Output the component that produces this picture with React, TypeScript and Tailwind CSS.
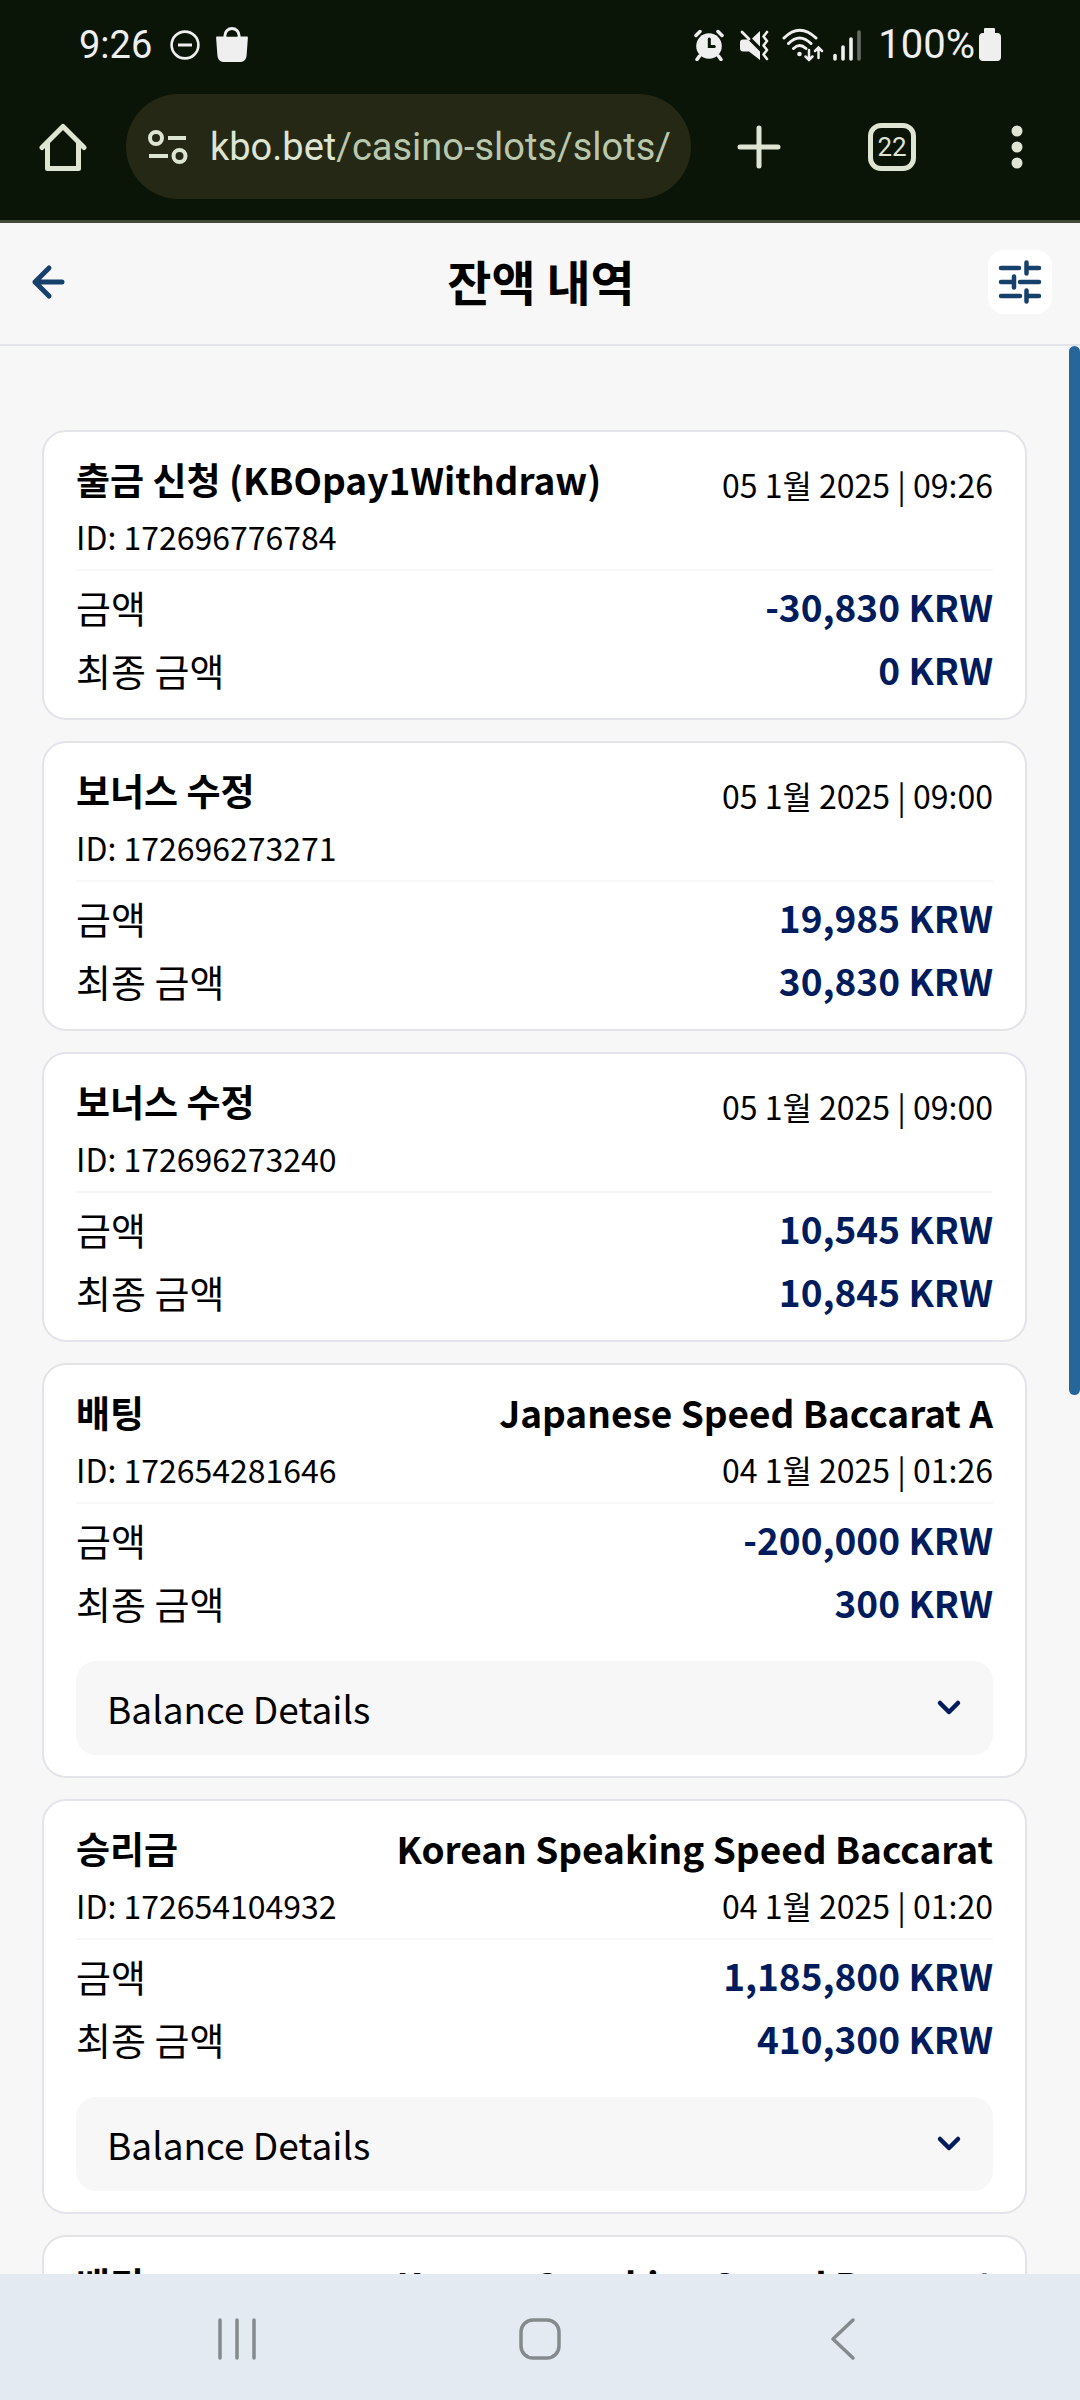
import { useState } from "react";

interface Transaction {
  id: string;
  type: string;
  date: string;
  amount: string;
  finalAmount: string;
  game?: string;
}

const transactions: Transaction[] = [
  {
    id: "172696776784",
    type: "출금 신청 (KBOpay1Withdraw)",
    date: "05 1월 2025 | 09:26",
    amount: "-30,830 KRW",
    finalAmount: "0 KRW",
  },
  {
    id: "172696273271",
    type: "보너스 수정",
    date: "05 1월 2025 | 09:00",
    amount: "19,985 KRW",
    finalAmount: "30,830 KRW",
  },
  {
    id: "172696273240",
    type: "보너스 수정",
    date: "05 1월 2025 | 09:00",
    amount: "10,545 KRW",
    finalAmount: "10,845 KRW",
  },
  {
    id: "172654281646",
    type: "배팅",
    game: "Japanese Speed Baccarat A",
    date: "04 1월 2025 | 01:26",
    amount: "-200,000 KRW",
    finalAmount: "300 KRW",
  },
  {
    id: "172654104932",
    type: "승리금",
    game: "Korean Speaking Speed Baccarat",
    date: "04 1월 2025 | 01:20",
    amount: "1,185,800 KRW",
    finalAmount: "410,300 KRW",
  },
  {
    id: "172654098817",
    type: "배팅",
    game: "Korean Speaking Speed Baccarat",
    date: "04 1월 2025 | 01:19",
    amount: "-400,000 KRW",
    finalAmount: "10,300 KRW",
  },
];

function StatusBar() {
  return (
    <div className="flex h-[90px] items-center justify-between px-[79px] text-[#efefef]">
      <div className="flex items-center">
        <span className="w-[91px] text-[38px] leading-[48px]">9:26</span>
        <svg width="30" height="30" viewBox="0 0 30 30" fill="none" stroke="currentColor" aria-hidden>
          <circle cx="15" cy="15" r="13.4" strokeWidth="2.6" />
          <path d="M8 15h14" strokeWidth="3" />
        </svg>
        <svg className="ml-4" width="32" height="36" viewBox="0 0 32 36" aria-hidden>
          <path d="M9 12V8.500a7 7 0 0 1 14 0V12" fill="none" stroke="currentColor" strokeWidth="3" />
          <path d="M1 9.500h30q1 0 .9 1l-1.300 18q-.6 6.500-6 6.500H7.400q-5.400 0-6-6.500L.1 10.500q-.1-1 .9-1z" fill="currentColor" />
          <path d="M10.500 9.500a5.500 5 0 0 1 11 0z" fill="#0a1508" />
        </svg>
      </div>
      <div className="flex items-center">
        <svg width="30" height="32" viewBox="0 0 30 32" fill="none" stroke="currentColor" strokeLinecap="round" aria-hidden>
          <circle cx="15" cy="17" r="12.8" fill="currentColor" stroke="none" />
          <path d="M2 6.500 6 2.500M28 6.500l-4-4" strokeWidth="3.500" />
          <path d="m5.500 27-2.500 3.500M24.500 27l2.500 3.500" strokeWidth="3.500" />
          <path d="M15.300 10v7.500h5" stroke="#0a1508" strokeWidth="3" />
        </svg>
        <svg className="ml-[15px]" width="30" height="32" viewBox="0 0 30 32" aria-hidden>
          <path d="M4 10.500h5L21 22.500V31L10 22.500H4q-3 0-3-3v-6q0-3 3-3zM13 9.500 21 2v15.500z" fill="currentColor" />
          <path d="m3 3 7 7" stroke="currentColor" strokeWidth="2.800" strokeLinecap="round" />
          <path d="m28 3-3.500 4.500L28 12l-3.500 4.500L28 21l-3.500 4.500L28 30" fill="none" stroke="currentColor" strokeWidth="2.600" strokeLinecap="round" strokeLinejoin="round" />
        </svg>
        <svg className="ml-[13px]" width="42" height="34" viewBox="0 0 42 34" fill="none" stroke="currentColor" strokeWidth="3" strokeLinecap="round" aria-hidden>
          <path d="M2 10Q17.500-5.500 34 10M6.500 15.500Q17.500 4.500 29 15.500M11.500 20.500q6-6 12.500 0" />
          <circle cx="17.500" cy="26" r="2.300" fill="currentColor" stroke="none" />
          <path d="M27 22v10M23.500 28.500l3.500 3.500 3.500-3.500M36.500 30V19.500M33 23l3.500-3.500L40 23" strokeWidth="2.500" />
        </svg>
        <svg className="ml-2" width="30" height="32" viewBox="0 0 30 32" stroke="currentColor" strokeWidth="3.600" strokeLinecap="round" aria-hidden>
          <path d="M3 26.500V30M11 18v12M19 10v20" />
          <path d="M27 3v27" opacity="0.400" />
        </svg>
        <span className="ml-4 text-[40px] leading-[48px]">100%</span>
        <svg className="ml-1" width="22" height="34" viewBox="0 0 22 34" fill="currentColor" aria-hidden>
          <path d="M6 0h9q1 0 1 1v4h2q4 0 4 4v20q0 4-4 4H4q-4 0-4-4V9q0-4 4-4h1V1q0-1 1-1z" />
        </svg>
      </div>
    </div>
  );
}

function BrowserBar() {
  return (
    <div className="flex h-[130px] items-start pt-1 text-[#dfe5d3]">
      <button type="button" aria-label="Home" className="flex h-[105px] w-[126px] items-center justify-center">
        <svg width="48" height="48" viewBox="0 0 48 48" fill="none" stroke="currentColor" strokeWidth="5" strokeLinecap="round" strokeLinejoin="round" aria-hidden>
          <path d="M3 24.500 24 3.500l21 21M8.500 20v25.500h31V20" />
        </svg>
      </button>
      <div className="flex h-[105px] min-w-0 flex-1 items-center rounded-full bg-[#242814] pr-5 pl-[22px]">
        <svg className="shrink-0" width="40" height="36" viewBox="0 0 40 36" fill="none" stroke="currentColor" strokeWidth="4" aria-hidden>
          <circle cx="8" cy="9" r="6" />
          <path d="M20 9h18M1 27h19" />
          <circle cx="31.500" cy="27" r="6" />
        </svg>
        <span className="ml-[22px] text-[38px] leading-[52px] whitespace-nowrap">
          kbo.bet<span className="text-[#b9c7ad]">/casino-slots/slots/</span>
        </span>
      </div>
      <div className="flex h-[105px] w-[389px] shrink-0 items-center">
        <button type="button" aria-label="New tab" className="ml-[46px]">
          <svg width="44" height="44" viewBox="0 0 44 44" stroke="currentColor" strokeWidth="5" strokeLinecap="round" aria-hidden>
            <path d="M22 3v38M3 22h38" />
          </svg>
        </button>
        <button
          type="button"
          aria-label="Switch tabs"
          className="ml-[87px] flex h-12 w-12 items-center justify-center rounded-[13px] border-[5px] border-current text-[26px] leading-8"
        >
          22
        </button>
        <button type="button" aria-label="Menu" className="ml-[90px]">
          <svg width="22" height="46" viewBox="0 0 22 46" fill="currentColor" aria-hidden>
            <circle cx="11" cy="7" r="5.500" />
            <circle cx="11" cy="23" r="5.500" />
            <circle cx="11" cy="39" r="5.500" />
          </svg>
        </button>
      </div>
    </div>
  );
}

function PageHeader() {
  return (
    <header className="flex h-[123px] shrink-0 items-center justify-between border-b-2 border-[#e2e4e9] pr-7 pb-1 pl-[30px] text-[#17416b]">
      <button type="button" aria-label="Back" className="flex h-16 w-16 items-center">
        <svg width="36" height="36" viewBox="0 0 36 36" fill="none" stroke="currentColor" strokeWidth="5" strokeLinecap="round" strokeLinejoin="round" aria-hidden>
          <path d="M19 4 5 18l14 14M5 18h27" />
        </svg>
      </button>
      <h1 className="pb-1 text-[48px] leading-[64px] font-bold text-black">잔액 내역</h1>
      <button type="button" aria-label="Filter" className="flex h-16 w-16 items-center justify-center rounded-2xl bg-white">
        <svg width="44" height="44" viewBox="0 0 44 44" fill="none" stroke="currentColor" strokeWidth="4.500" strokeLinecap="round" aria-hidden>
          <path d="M3 8h18M28.500 2.500v11M29 8h12M3 22h13M16 16.500v11M22 22h19M3 36h19M28.500 30.500v11M29 36h12" />
        </svg>
      </button>
    </header>
  );
}

function BalanceDetails() {
  const [open, setOpen] = useState(false);
  return (
    <button
      type="button"
      aria-expanded={open}
      onClick={() => setOpen(!open)}
      className="mt-[27px] mb-1 flex h-[94px] w-full items-center justify-between rounded-[20px] bg-[#f7f7f7] px-[31px] text-[37px] leading-[62px]"
    >
      Balance Details
      <svg width="26" height="18" viewBox="0 0 26 18" fill="none" stroke="#001c5c" strokeWidth="4.500" strokeLinecap="round" strokeLinejoin="round" aria-hidden>
        <path d="m4 4 9 9 9-9" />
      </svg>
    </button>
  );
}

function TransactionCard({ tx }: { tx: Transaction }) {
  return (
    <li className="rounded-3xl border-2 border-[#e2e4e9] bg-white px-8 pt-[18px] pb-[17px]">
      <div className="border-b-2 border-[#f7f7f7] pb-[5px]">
        <div className="flex items-end justify-between text-[37px] leading-[58px]">
          <h2 className="font-bold">{tx.type}</h2>
          {tx.game ? (
            <span className="font-bold">{tx.game}</span>
          ) : (
            <time className="text-[32px] leading-[48px]">{tx.date}</time>
          )}
        </div>
        <div className="flex justify-between text-[32px] leading-[56px]">
          <span>ID: {tx.id}</span>
          {tx.game && <time>{tx.date}</time>}
        </div>
      </div>
      <dl className="grid grid-cols-2 pt-1 leading-[63px]">
        <dt className="text-[38px] leading-[63px]">금액</dt>
        <dd className="text-right text-[37px] leading-[63px] font-bold text-[#001c5c]">{tx.amount}</dd>
        <dt className="text-[38px] leading-[63px]">최종 금액</dt>
        <dd className="text-right text-[37px] leading-[63px] font-bold text-[#001c5c]">{tx.finalAmount}</dd>
      </dl>
      {tx.game && <BalanceDetails />}
    </li>
  );
}

function NavigationBar() {
  return (
    <nav className="grid h-[126px] shrink-0 grid-cols-3 bg-[#e3eaf2] px-[86px] pt-1 text-[#858a8d]">
      <button type="button" aria-label="Recent apps" className="flex items-center justify-center">
        <svg width="42" height="44" viewBox="0 0 42 44" stroke="currentColor" strokeWidth="3.500" strokeLinecap="round" aria-hidden>
          <path d="M4 3v38M21 3v38M38 3v38" />
        </svg>
      </button>
      <button type="button" aria-label="Home screen" className="flex items-center justify-center">
        <svg width="44" height="44" viewBox="0 0 44 44" fill="none" stroke="currentColor" strokeWidth="3.500" aria-hidden>
          <rect x="3" y="3" width="38" height="38" rx="12" />
        </svg>
      </button>
      <button type="button" aria-label="Go back" className="flex items-center justify-center">
        <svg width="28" height="44" viewBox="0 0 28 44" fill="none" stroke="currentColor" strokeWidth="3.500" strokeLinecap="round" strokeLinejoin="round" aria-hidden>
          <path d="M24 3 4 22l20 19" />
        </svg>
      </button>
    </nav>
  );
}

export default function App() {
  return (
    <div className="flex h-screen flex-col bg-[#f7f7f7] font-['Noto_Sans_CJK_KR','Noto_Sans',sans-serif] text-black">
      <div className="shrink-0 border-b-[3px] border-[#414b38] bg-[#0a1508] font-[Roboto,sans-serif]">
        <StatusBar />
        <BrowserBar />
      </div>
      <PageHeader />
      <main className="relative min-h-0 flex-1">
        <ul className="flex h-full flex-col gap-[21px] overflow-y-auto pt-[84px] pr-[53px] pl-[42px] [scrollbar-width:none]">
          {transactions.map((tx) => (
            <TransactionCard key={tx.id} tx={tx} />
          ))}
        </ul>
        <div className="absolute top-0 right-0 h-[54.4%] w-[11px] rounded-full bg-[#27669b]" />
      </main>
      <NavigationBar />
    </div>
  );
}
